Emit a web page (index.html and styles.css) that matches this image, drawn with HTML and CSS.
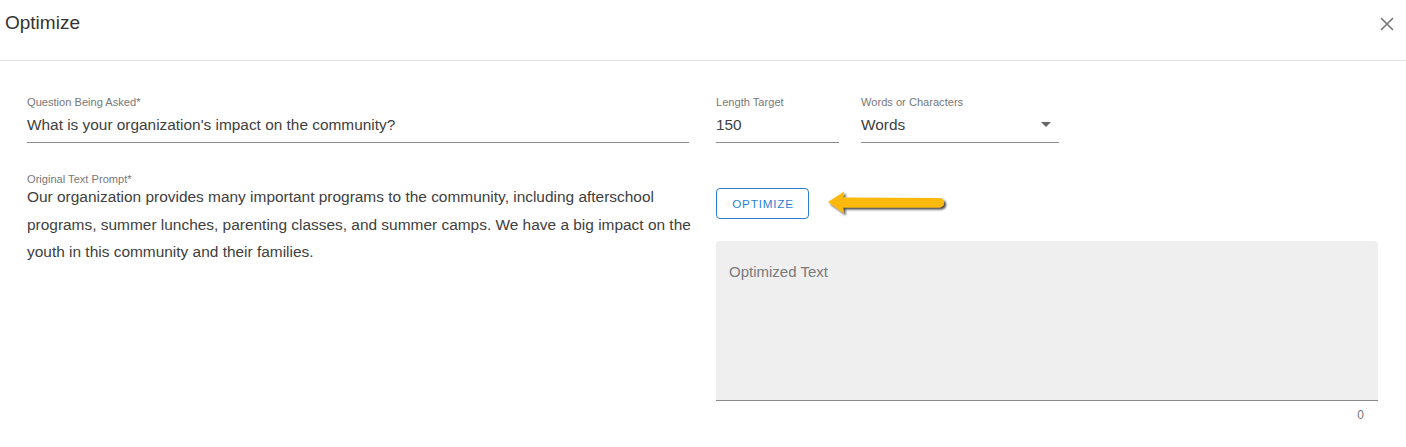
FILE: index.html
```html
<!DOCTYPE html>
<html>
<head>
<meta charset="utf-8">
<link rel="stylesheet" href="styles.css">
</head>
<body>
<div class="dialog">
  <header class="header">
    <h2 class="title">Optimize</h2>
    <button class="close" aria-label="close">
      <svg width="14" height="14" viewBox="0 0 14 14"><path d="M1 1L13 13M13 1L1 13" stroke="#757575" stroke-width="1.6" fill="none"/></svg>
    </button>
  </header>
  <div class="body">
    <div class="left">
      <div class="field q">
        <label class="label">Question Being Asked*</label>
        <div class="input">What is your organization's impact on the community?</div>
      </div>
      <div class="field prompt">
        <label class="label">Original Text Prompt*</label>
        <div class="textarea">Our organization provides many important programs to the community, including afterschool programs, summer lunches, parenting classes, and summer camps. We have a big impact on the youth in this community and their families.</div>
      </div>
    </div>
    <div class="right">
      <div class="row">
        <div class="field len">
          <label class="label">Length Target</label>
          <div class="input">150</div>
        </div>
        <div class="field sel">
          <label class="label">Words or Characters</label>
          <div class="input select">Words<span class="caret"></span></div>
        </div>
      </div>
      <div class="action">
        <button class="btn">OPTIMIZE</button>
        <svg class="arrow" width="128" height="30" viewBox="0 0 128 30">
          <defs>
            <filter id="sh" x="-10%" y="-30%" width="120%" height="170%">
              <feDropShadow dx="2" dy="2" stdDeviation="1.2" flood-color="#000" flood-opacity="0.75"/>
            </filter>
          </defs>
          <path d="M2 14 L18 3.5 L17 9.5 L113 10 Q118 10 118 14.5 Q118 19 113 19.5 L17 19.5 L18 25.5 Z" fill="#fbb80b" filter="url(#sh)"/>
        </svg>
      </div>
      <div class="output">
        <div class="outbox"><span class="placeholder">Optimized Text</span></div>
        <div class="counter">0</div>
      </div>
    </div>
  </div>
</div>
</body>
</html>
```

FILE: styles.css
```css
* { box-sizing: border-box; }
html, body { margin: 0; padding: 0; background: #fff; }
body { font-family: "Liberation Sans", Arial, sans-serif; color: #404040; }

.dialog { width: 1406px; }

.header {
  height: 61px;
  border-bottom: 1px solid #e0e0e0;
  display: flex;
  align-items: center;
  justify-content: space-between;
  padding: 0 12px 0 5px;
}
.title {
  margin: 0;
  font-size: 19px;
  font-weight: 400;
  color: #333;
  position: relative;
  top: -7px;
}
.close {
  background: none;
  border: 0;
  padding: 0;
  width: 14px;
  height: 14px;
  display: flex;
  position: relative;
  top: -6px;
}

.body {
  display: flex;
  padding: 34px 28px 0 27px;
  gap: 27px;
}
.left { width: 662px; }
.right { flex: 1; }

.field { display: flex; flex-direction: column; }
.label {
  font-size: 11.1px;
  color: #777;
  line-height: 14px;
}
.input {
  font-size: 15.4px;
  color: #404040;
  line-height: 19px;
  padding: 6px 0 8px;
  border-bottom: 1px solid #8a8a8a;
}
.q { height: 50px; }

.prompt { margin-top: 27px; }
.textarea {
  font-size: 15.45px;
  color: #404040;
  line-height: 27.5px;
  margin-top: -3px;
  margin-right: -8px;
}

.row { display: flex; gap: 22px; }
.len { width: 123px; }
.sel { width: 198px; }
.select { display: flex; justify-content: space-between; align-items: center; }
.caret {
  width: 0; height: 0;
  border-left: 5px solid transparent;
  border-right: 5px solid transparent;
  border-top: 5px solid #666;
  margin-right: 8px;
}

.action {
  display: flex;
  align-items: center;
  margin-top: 45px;
  gap: 17px;
}
.btn {
  width: 93px;
  height: 31px;
  border: 1px solid #2a7fd4;
  border-radius: 4px;
  background: #fff;
  color: #2a7fd4;
  font-family: "Liberation Sans", Arial, sans-serif;
  font-size: 11.7px;
  letter-spacing: 0.8px;
  padding: 0 0 0 1px;
}
.arrow { display: block; margin-top: -2px; }

.output { margin-top: 22px; }
.outbox {
  height: 160px;
  background: #efefef;
  border-radius: 4px 4px 0 0;
  border-bottom: 1px solid #8a8a8a;
  padding: 22px 13px;
}
.placeholder { font-size: 15px; color: #7a7a7a; }
.counter {
  text-align: right;
  font-size: 12px;
  color: #757575;
  padding-right: 14px;
  margin-top: 7px;
}
```
